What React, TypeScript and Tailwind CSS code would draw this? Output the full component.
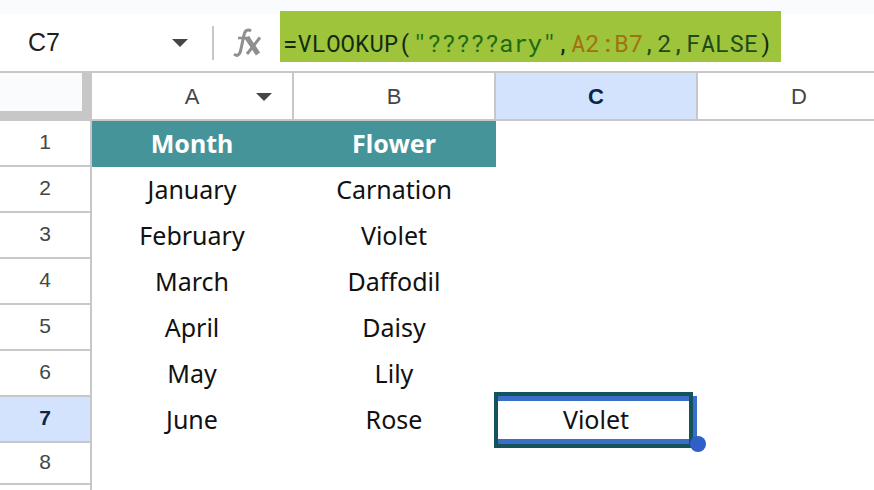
const rows = [
  ["January", "Carnation"],
  ["February", "Violet"],
  ["March", "Daffodil"],
  ["April", "Daisy"],
  ["May", "Lily"],
  ["June", "Rose"],
];

function Caret({ className }: { className: string }) {
  return (
    <svg width="16" height="8" viewBox="0 0 16 8" className={className}>
      <path d="M0 0H16L8 8Z" fill="#444746" />
    </svg>
  );
}

function RowHead({ n, active }: { n: number; active?: boolean }) {
  return (
    <div
      className={`flex items-center justify-center w-[92px] shrink-0 border-r-[2px] border-b-[2px] border-[#c7c7c7] pb-[3px] text-[21px] ${
        active ? "bg-[#d3e3fd] font-bold text-[#0b2545]" : "bg-white text-[#444746]"
      }`}
    >
      {n}
    </div>
  );
}

function Cell({ children, bold }: { children?: React.ReactNode; bold?: boolean }) {
  return (
    <div
      className={`w-[202px] shrink-0 flex items-center justify-center text-center pr-[2px] ${
        bold ? "bg-[#45949a] text-white font-bold" : "text-[#111]"
      }`}
    >
      {children}
    </div>
  );
}

function Fx() {
  return (
    <svg width="29" height="30" viewBox="0 0 29 30" fill="none" stroke="#8f8f8f">
      <path d="M1 26 C4 29 7 27 8 21 L11 7 C12 2 15 1 18 3" strokeWidth="3" />
      <path d="M5 10 H17" strokeWidth="2.6" />
      <path d="M14 9.5 L25 26" strokeWidth="5" />
      <path d="M27 9.5 L14 26" strokeWidth="3" />
    </svg>
  );
}

export default function App() {
  return (
    <div className="w-[874px] h-[490px] overflow-hidden bg-white flex flex-col font-['Noto_Sans',sans-serif] text-[25px]">
      <div className="h-[14px] bg-[#f9fbfd] shrink-0" />
      <div className="h-[59px] shrink-0 flex items-center border-b-[2px] border-[#c7c7c7]">
        <div className="w-[172px] pl-[28px] font-['Liberation_Sans',sans-serif] text-[25px] text-[#1f1f1f]">C7</div>
        <Caret className="shrink-0" />
        <div className="ml-[24px] w-[2px] h-[34px] bg-[#c7c7c7]" />
        <div className="w-[66px] flex justify-center">
          <Fx />
        </div>
        <div className="w-[501px] h-[51px] -mt-[13px] bg-[#9dc43b] pl-[3px] pt-[13px] flex items-center font-['Roboto_Mono',monospace] text-[24px] text-[#142a10] whitespace-pre">
          <span>=VLOOKUP(</span>
          <span className="text-[#1f6a14]">"?????ary"</span>
          <span>,</span>
          <span className="text-[#a2700f]">A2:B7</span>
          <span className="text-[#1f4a1c]">,2,FALSE</span>
          <span>)</span>
        </div>
      </div>
      <div className="h-[48px] shrink-0 flex font-['Liberation_Sans',sans-serif] text-[22px] text-[#444746] border-b-[2px] border-[#c7c7c7]">
        <div className="w-[92px] shrink-0 border-r-[3px] border-[#c7c7c7] bg-[#c7c7c7]">
          <div className="w-[82px] h-[38px] bg-[#f9fbfd]" />
        </div>
        <div className="w-[202px] shrink-0 relative flex items-center justify-center border-r-[2px] border-[#c7c7c7]">
          A
          <Caret className="absolute right-[20px] top-[20px]" />
        </div>
        <div className="w-[202px] shrink-0 flex items-center justify-center border-r-[2px] border-[#c7c7c7]">B</div>
        <div className="w-[202px] shrink-0 flex items-center justify-center bg-[#d3e3fd] font-bold text-[#0b2545] border-r-[2px] border-[#c7c7c7]">C</div>
        <div className="w-[202px] shrink-0 flex items-center justify-center">D</div>
      </div>
      <div className="flex flex-col font-['Liberation_Sans',sans-serif]">
        <div className="flex h-[46px] shrink-0">
          <RowHead n={1} />
          <div className="flex font-['Noto_Sans',sans-serif] text-[25px]">
            <Cell bold>Month</Cell>
            <Cell bold>Flower</Cell>
          </div>
        </div>
        {rows.map((r, i) => (
          <div key={i} className="flex h-[46px] shrink-0">
            <RowHead n={i + 2} active={i === 5} />
            <div className="flex font-['Noto_Sans',sans-serif] text-[25px]">
              <Cell>{r[0]}</Cell>
              <Cell>{r[1]}</Cell>
              {i === 5 ? (
                <div className="relative w-[202px] shrink-0 flex items-center justify-center text-[#111]">
                  <span className="pr-[2px]">Violet</span>
                  <div className="absolute -left-[2px] right-[5px] -top-[5px] -bottom-[5px] border-[4px] border-[#15535c]">
                    <div className="absolute inset-x-0 top-0 h-[5px] bg-[#3a6fc9]" />
                    <div className="absolute inset-x-0 bottom-0 h-[5px] bg-[#3a6fc9]" />
                  </div>
                  <div className="absolute right-[1px] -top-[1px] bottom-[5px] w-[4px] bg-[#3a6fc9]" />
                  <div className="absolute -right-[8px] -bottom-[9px] w-[16px] h-[16px] rounded-full bg-[#2f5fc7]" />
                </div>
              ) : null}
            </div>
          </div>
        ))}
        <div className="flex h-[42px] shrink-0">
          <RowHead n={8} />
        </div>
        <div className="flex h-[10px] shrink-0">
          <div className="w-[92px] border-r-[2px] border-[#c7c7c7]" />
        </div>
      </div>
    </div>
  );
}
